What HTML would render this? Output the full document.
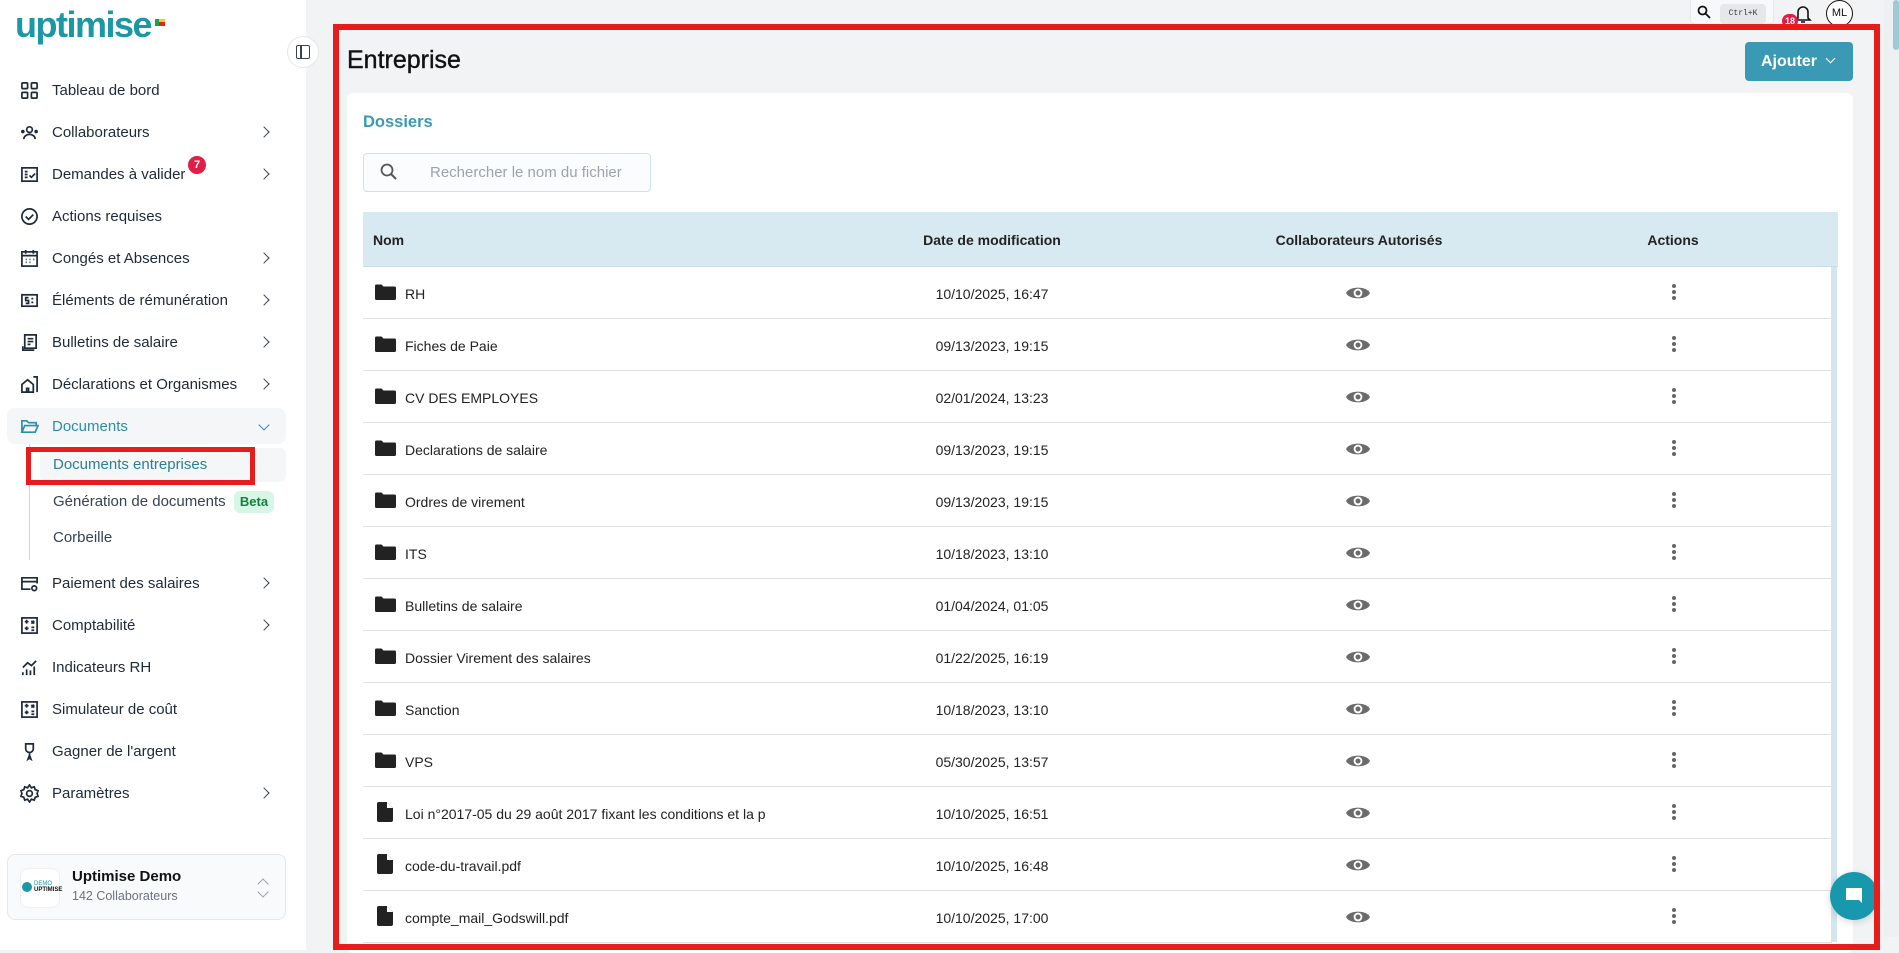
<!DOCTYPE html>
<html><head><meta charset="utf-8">
<style>
*{box-sizing:border-box;margin:0;padding:0}
body{width:1899px;height:950px;overflow:hidden;background:#f2f3f5;font-family:"Liberation Sans",Arial,sans-serif;color:#1f2937;position:relative}
.abs{position:absolute}
#side{left:0;top:0;width:306px;height:950px;background:#fff}
.mi{position:absolute;left:0;width:306px;height:34px;font-size:15px;color:#1f2937;display:flex;align-items:center}
.mi svg{position:absolute;left:20px;width:19px;height:19px;fill:none;stroke:#1f2937;stroke-width:1.8}
.mi span{position:absolute;left:52px}
.chev{position:absolute;left:260px;width:8px;height:8px;border-right:1.8px solid #374151;border-bottom:1.8px solid #374151;transform:rotate(-45deg)}
.sub{position:absolute;left:53px;font-size:15px;color:#374151}
.row{position:absolute;left:363px;width:1469px;height:52px;border-bottom:1px solid #e0e0e0;font-size:14px;color:#222}
.row .n{position:absolute;left:42px;top:19px;white-space:nowrap}
.row .d{position:absolute;left:629px;width:0;top:19px;display:flex;justify-content:center;white-space:nowrap}
.row svg.ic{position:absolute;left:12px;top:17px}
.eye{position:absolute;left:983px;top:18px}
.dots{position:absolute;left:1309px;top:17px;width:4px}
.dots i{display:block;width:4px;height:4px;border-radius:50%;background:#666;margin-bottom:2px}
</style></head><body>

<div class="abs" id="side">
  <div class="abs" style="left:15px;top:4px;font-size:36px;font-weight:bold;color:#1c97a6;letter-spacing:-1.5px">uptimise</div>
  <div class="abs" style="left:155px;top:19px;width:4px;height:7px;background:#16a34a"></div>
  <div class="abs" style="left:159px;top:19px;width:6px;height:4px;background:#facc15"></div>
  <div class="abs" style="left:159px;top:22px;width:6px;height:4px;background:#dc2626"></div>
  <div class="abs" style="left:287px;top:36px;width:32px;height:32px;border-radius:50%;border:1px solid #e5e7eb;background:#fff"></div>
  <div class="abs" style="left:296px;top:45px;width:14px;height:14px;border:1.8px solid #374151;border-radius:2px"></div>
  <div class="abs" style="left:300px;top:45px;width:2px;height:14px;background:#374151"></div>

  <div class="mi" style="top:73px"><svg viewBox="0 0 20 20"><rect x="2" y="2" width="6" height="6" rx="1"/><rect x="12" y="2" width="6" height="6" rx="1"/><rect x="2" y="12" width="6" height="6" rx="1"/><rect x="12" y="12" width="6" height="6" rx="1"/></svg><span>Tableau de bord</span></div>
  <div class="mi" style="top:115px"><svg viewBox="0 0 20 20"><circle cx="10" cy="7" r="3"/><path d="M4 17c0-3 3-5 6-5s6 2 6 5"/><circle cx="3" cy="9" r="1"/><circle cx="17" cy="9" r="1"/></svg><span>Collaborateurs</span><i class="chev"></i></div>
  <div class="mi" style="top:157px"><svg viewBox="0 0 20 20"><rect x="2" y="3" width="16" height="14"/><path d="M5 7h3M5 10h3M5 13h3M10 11l2 2 4-4"/></svg><span>Demandes à valider</span><i class="chev"></i></div>
  <div class="abs" style="left:188px;top:156px;width:18px;height:18px;border-radius:50%;background:#e11d48;color:#fff;font-size:11px;font-weight:bold;text-align:center;line-height:18px">7</div>
  <div class="mi" style="top:199px"><svg viewBox="0 0 20 20"><circle cx="10" cy="10" r="8"/><path d="M6 10l3 3 5-5"/></svg><span>Actions requises</span></div>
  <div class="mi" style="top:241px"><svg viewBox="0 0 20 20"><rect x="2" y="3" width="16" height="15"/><path d="M2 7h16M6 1v4M14 1v4M6 11h1M10 11h1M14 11h1M6 14h1M10 14h1"/></svg><span>Congés et Absences</span><i class="chev"></i></div>
  <div class="mi" style="top:283px"><svg viewBox="0 0 20 20"><rect x="2" y="4" width="16" height="12"/><path d="M9 7H6v3h3v3H6M12 8h2M12 12h2"/></svg><span>Éléments de rémunération</span><i class="chev"></i></div>
  <div class="mi" style="top:325px"><svg viewBox="0 0 20 20"><path d="M5 2h12v14H5zM8 6h6M8 9h6M8 12h3M3 14v4h12"/></svg><span>Bulletins de salaire</span><i class="chev"></i></div>
  <div class="mi" style="top:367px"><svg viewBox="0 0 20 20"><path d="M2 18V10l6-5 6 5v8H2zM7 18v-4h2v4M14 2h4v16"/></svg><span>Déclarations et Organismes</span><i class="chev"></i></div>
  <div class="abs" style="left:7px;top:408px;width:279px;height:36px;background:#f4f6f8;border-radius:8px"></div>
  <div class="mi" style="top:409px"><svg viewBox="0 0 20 20" style="stroke:#2b8fa6"><path d="M2 16V4h5l2 2h8v3M2 16l3-7h14l-3 7z"/></svg><span style="color:#2b8fa6">Documents</span><i class="chev" style="transform:rotate(45deg);border-color:#2b8fa6;top:12px"></i></div>
  <div class="abs" style="left:29px;top:444px;width:1px;height:116px;background:#d1d5db"></div>
  <div class="abs" style="left:40px;top:448px;width:246px;height:34px;background:#f4f6f8;border-radius:6px"></div>
  <div class="abs" style="left:26px;top:447px;width:229px;height:38px;border:5px solid #e51d1d"></div>
  <div class="sub" style="top:456px;color:#2b7f96">Documents entreprises</div>
  <div class="sub" style="top:493px">Génération de documents</div>
  <div class="abs" style="left:234px;top:491px;width:40px;height:22px;border-radius:6px;background:#d7f6e6;color:#15803d;font-size:13px;font-weight:bold;text-align:center;line-height:22px">Beta</div>
  <div class="sub" style="top:529px">Corbeille</div>
  <div class="mi" style="top:566px"><svg viewBox="0 0 20 20"><path d="M11 16H2V4h16v6M2 8h16"/><circle cx="15" cy="15" r="2.5"/></svg><span>Paiement des salaires</span><i class="chev"></i></div>
  <div class="mi" style="top:608px"><svg viewBox="0 0 20 20"><rect x="2" y="2" width="16" height="16"/><path d="M5 6h4M7 4v4M12 5l3 3M15 5l-3 3M5 13h4M7 11v4M12 12h3M12 15h3"/></svg><span>Comptabilité</span><i class="chev"></i></div>
  <div class="mi" style="top:650px"><svg viewBox="0 0 20 20"><path d="M3 18v-3M7 18v-6M11 18v-5M15 18V9M3 10l5-5 4 3 5-5"/></svg><span>Indicateurs RH</span></div>
  <div class="mi" style="top:692px"><svg viewBox="0 0 20 20"><rect x="2" y="2" width="16" height="16"/><path d="M5 6h4M7 4v4M12 5l3 3M15 5l-3 3M5 13h4M7 11v4M12 12h3M12 15h3"/></svg><span>Simulateur de coût</span></div>
  <div class="mi" style="top:734px"><svg viewBox="0 0 20 20"><path d="M6 2h8v5a4 4 0 0 1-8 0zM10 11v3M10 14l1.5 4-1.5-1-1.5 1z"/></svg><span>Gagner de l'argent</span></div>
  <div class="mi" style="top:776px"><svg viewBox="0 0 20 20"><circle cx="10" cy="10" r="3"/><path d="M10 1l2 3 3-1 1 3 3 1-1 3 1 3-3 1-1 3-3-1-2 3-2-3-3 1-1-3-3-1 1-3-1-3 3-1 1-3 3 1z"/></svg><span>Paramètres</span><i class="chev"></i></div>

  <div class="abs" style="left:7px;top:854px;width:279px;height:66px;border:1px solid #e5e7eb;border-radius:8px;background:#f9fafb"></div>
  <div class="abs" style="left:20px;top:868px;width:40px;height:40px;border-radius:8px;background:#fff;border:1px solid #f0f0f0"></div>
  <div class="abs" style="left:22px;top:882px;width:10px;height:10px;border-radius:50%;background:#1c97a6"></div>
  <div class="abs" style="left:34px;top:881px;font-size:6px;color:#1c97a6;line-height:6px">DEMO<br><b style="color:#111">UPTIMISE</b></div>
  <div class="abs" style="left:72px;top:868px;font-size:15px;font-weight:bold;color:#111">Uptimise Demo</div>
  <div class="abs" style="left:72px;top:889px;font-size:12.5px;color:#6b7280">142 Collaborateurs</div>
  <div class="abs" style="left:259px;top:880px;width:8px;height:8px;border-left:1.5px solid #9ca3af;border-top:1.5px solid #9ca3af;transform:rotate(45deg)"></div>
  <div class="abs" style="left:259px;top:885px;width:8px;height:8px;border-right:1.5px solid #9ca3af;border-bottom:1.5px solid #9ca3af;transform:rotate(45deg);margin-top:3px"></div>
</div>

<div class="abs" style="left:1690px;top:-4px;width:84px;height:29px;background:#f7f8fa;border:1px solid #e5e7eb;border-radius:6px"></div>
<svg class="abs" style="left:1697px;top:5px" width="14" height="14" viewBox="0 0 14 14"><circle cx="5.5" cy="5.5" r="4" fill="none" stroke="#111" stroke-width="1.8"/><path d="M8.5 8.5L13 13" stroke="#111" stroke-width="1.8"/></svg>
<div class="abs" style="left:1720px;top:4px;width:46px;height:20px;background:#e5e7eb;border-radius:4px;font-family:'Liberation Mono',monospace;font-size:8px;text-align:center;line-height:20px;color:#333">Ctrl+K</div>
<svg class="abs" style="left:1794px;top:4px" width="18" height="20" viewBox="0 0 18 20"><path d="M4 14V8a5 5 0 0 1 10 0v6l2 2H2z M7 18h4" fill="none" stroke="#111" stroke-width="1.6"/></svg>
<div class="abs" style="left:1782px;top:14px;width:16px;height:14px;border-radius:7px;background:#e11d48;color:#fff;font-size:9px;font-weight:bold;text-align:center;line-height:14px">18</div>
<div class="abs" style="left:1826px;top:0px;width:27px;height:27px;border-radius:50%;border:1.3px solid #111;background:#fff;font-size:11px;text-align:center;line-height:25px;color:#111">ML</div>

<div class="abs" style="left:347px;top:46px;font-size:25px;color:#111;-webkit-text-stroke:0.4px #111">Entreprise</div>
<div class="abs" style="left:1745px;top:42px;width:108px;height:39px;background:#3a9ab5;border-radius:4px;color:#fff;font-size:16px;font-weight:bold;line-height:39px;padding-left:16px">Ajouter</div>
<div class="abs" style="left:1827px;top:55px;width:7px;height:7px;border-right:1.8px solid #fff;border-bottom:1.8px solid #fff;transform:rotate(45deg)"></div>

<div class="abs" style="left:347px;top:93px;width:1506px;height:860px;background:#fff;border-radius:6px"></div>
<div class="abs" style="left:363px;top:113px;font-size:16.5px;font-weight:bold;color:#3a9ab5">Dossiers</div>
<div class="abs" style="left:363px;top:153px;width:288px;height:39px;border:1px solid #cfe3ea;border-radius:4px;background:#fbfcfd"></div>
<svg class="abs" style="left:380px;top:163px" width="18" height="18" viewBox="0 0 18 18"><circle cx="7" cy="7" r="5.5" fill="none" stroke="#555" stroke-width="1.8"/><path d="M11 11l5 5" stroke="#555" stroke-width="2"/></svg>
<div class="abs" style="left:430px;top:164px;font-size:15px;color:#9ca3af">Rechercher le nom du fichier</div>

<div class="abs" style="left:363px;top:212px;width:1475px;height:55px;background:#d7eaf2;border-bottom:1px solid #c9dfe8"></div>
<div class="abs" style="left:373px;top:232px;font-size:14px;font-weight:bold;color:#222">Nom</div>
<div class="abs" style="left:992px;top:232px;width:0;display:flex;justify-content:center;white-space:nowrap;font-size:14px;font-weight:bold;color:#222">Date de modification</div>
<div class="abs" style="left:1359px;top:232px;width:0;display:flex;justify-content:center;white-space:nowrap;font-size:14px;font-weight:bold;color:#222">Collaborateurs Autorisés</div>
<div class="abs" style="left:1673px;top:232px;width:0;display:flex;justify-content:center;white-space:nowrap;font-size:14px;font-weight:bold;color:#222">Actions</div>
<div class="abs" style="left:1831px;top:267px;width:6px;height:675px;background:#d2e6ec"></div>

<div id="rows"></div>
<script>
var data=[["RH","10/10/2025, 16:47",0],["Fiches de Paie","09/13/2023, 19:15",0],["CV DES EMPLOYES","02/01/2024, 13:23",0],["Declarations de salaire","09/13/2023, 19:15",0],["Ordres de virement","09/13/2023, 19:15",0],["ITS","10/18/2023, 13:10",0],["Bulletins de salaire","01/04/2024, 01:05",0],["Dossier Virement des salaires","01/22/2025, 16:19",0],["Sanction","10/18/2023, 13:10",0],["VPS","05/30/2025, 13:57",0],["Loi n°2017-05 du 29 août 2017 fixant les conditions et la p","10/10/2025, 16:51",1],["code-du-travail.pdf","10/10/2025, 16:48",1],["compte_mail_Godswill.pdf","10/10/2025, 17:00",1]];
var h="";
var folder='<svg class="ic" width="21" height="17" viewBox="0 0 21 17"><path d="M0 2a1.5 1.5 0 0 1 1.5-1.5h5l2 2h11a1.5 1.5 0 0 1 1.5 1.5v10.5a1.5 1.5 0 0 1-1.5 1.5h-18A1.5 1.5 0 0 1 0 14.5z" fill="#222"/></svg>';
var file='<svg class="ic" width="16" height="20" viewBox="0 0 16 20" style="left:14px;top:15px"><path d="M2 0h8l6 6v12a2 2 0 0 1-2 2H2a2 2 0 0 1-2-2V2a2 2 0 0 1 2-2z" fill="#222"/><path d="M10 0v6h6" fill="#fff"/></svg>';
var eye='<svg class="eye" width="24" height="16" viewBox="0 0 22 14"><path d="M0 7C3 0.5 19 0.5 22 7C19 13.5 3 13.5 0 7z" fill="#6b6b6b"/><circle cx="11" cy="7" r="4" fill="#fff"/><circle cx="11" cy="7" r="2.3" fill="#6b6b6b"/></svg>';
data.forEach(function(r,i){var clip=i==10?'style="width:382px;overflow:hidden"':'';
h+='<div class="row" style="top:'+(267+i*52)+'px">'+(r[2]?file:folder)+'<div class="n" '+clip+'>'+r[0]+'</div><div class="d">'+r[1]+'</div>'+eye+'<div class="dots"><i></i><i></i><i></i></div></div>';});
document.getElementById("rows").innerHTML=h;
</script>

<div class="abs" style="left:1884px;top:0;width:15px;height:937px;background:#eef1f4"></div>
<div class="abs" style="left:1893px;top:0;width:6px;height:50px;background:#9fcad5;border-radius:3px"></div>
<div class="abs" style="left:1830px;top:872px;width:48px;height:48px;border-radius:50%;background:#1898ad;box-shadow:0 2px 8px rgba(0,0,0,.15)"></div>
<svg class="abs" style="left:1844px;top:886px" width="20" height="20" viewBox="0 0 20 20"><path d="M2 2h16v15l-3-3H2z" fill="#fff"/></svg>

<div class="abs" style="left:333px;top:24px;width:1547px;height:926px;border:6px solid #e51d1d"></div>
</body></html>
